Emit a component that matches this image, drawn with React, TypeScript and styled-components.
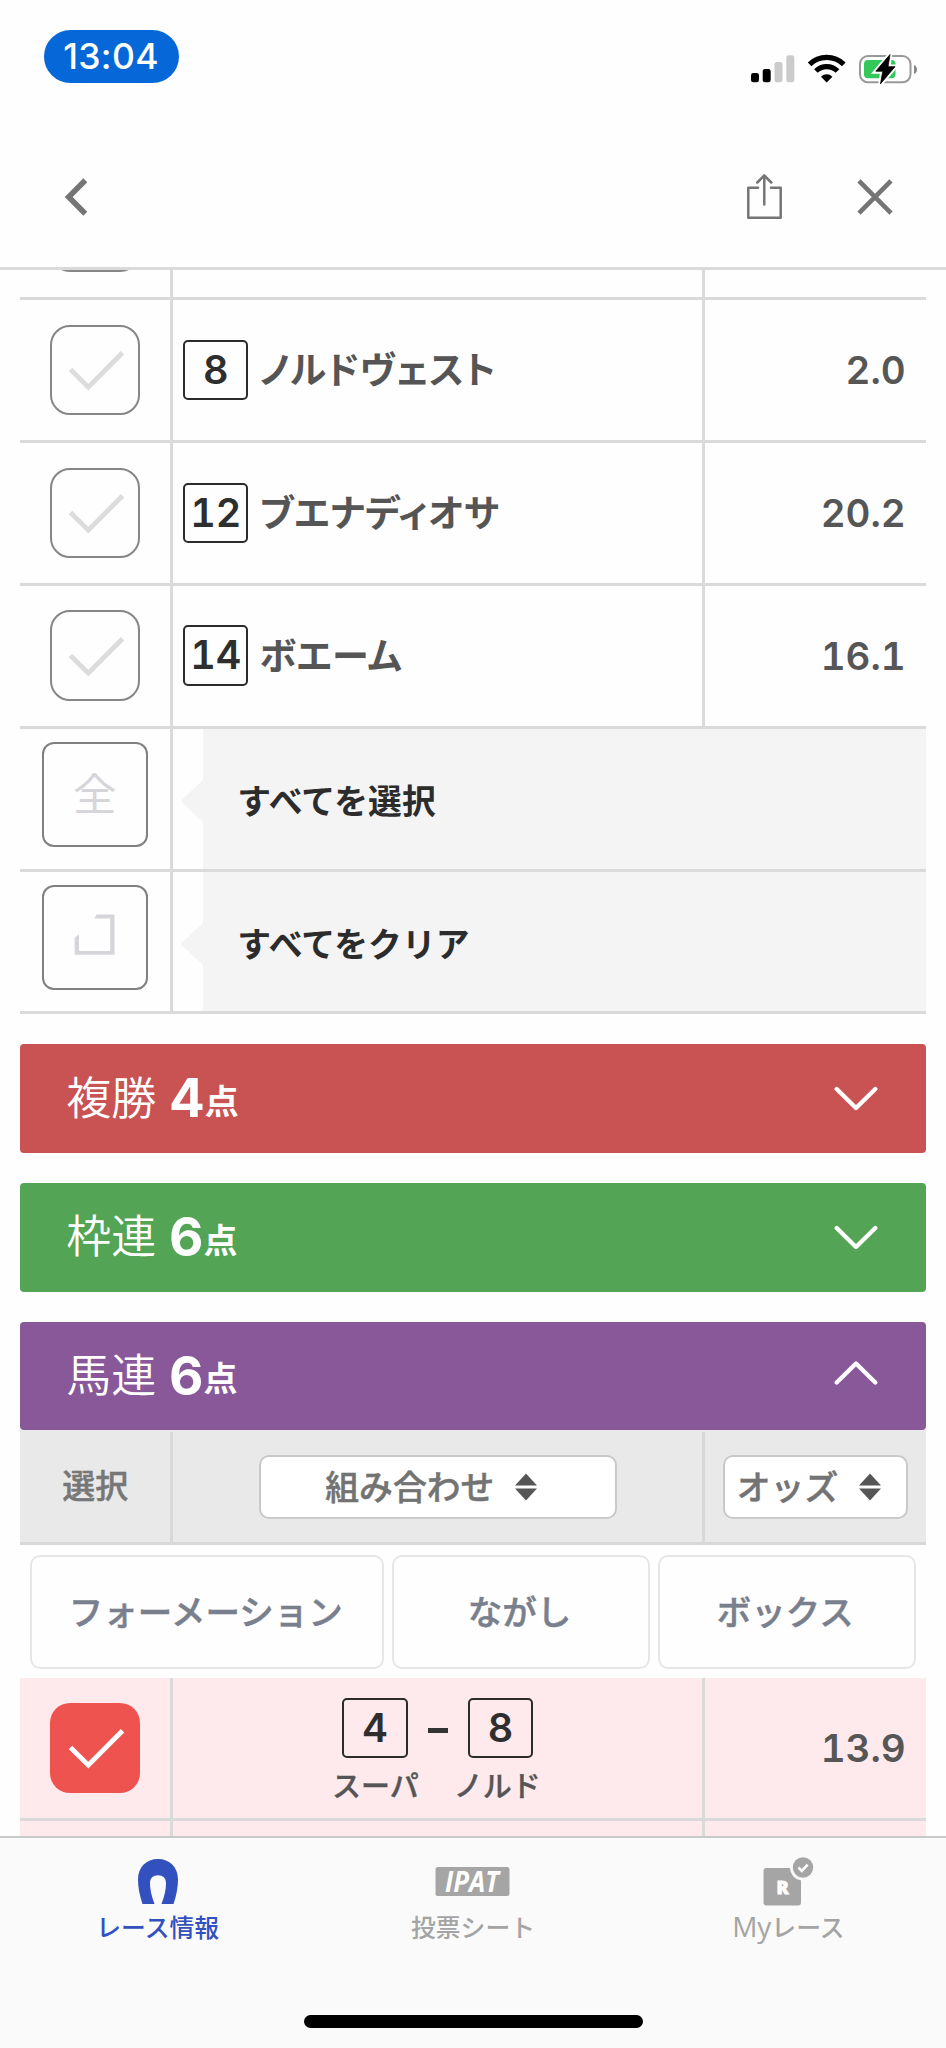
import React from "react";
import styled, { createGlobalStyle } from "styled-components";

const jp = `"Noto Sans CJK JP", "Noto Sans", sans-serif`;
const num = `Inter, "Noto Sans CJK JP", sans-serif`;
const LINE = "#dadada";

const GlobalStyle = createGlobalStyle`
  * { box-sizing: border-box; }
  body { margin: 0; background: #fefefe; }
  svg { display: block; flex: none; }
  button { font: inherit; margin: 0; padding: 0; border: 0; background: none; }
`;

const Screen = styled.div`
  width: 946px;
  height: 2048px;
  display: flex;
  flex-direction: column;
  overflow: hidden;
  background: #fefefe;
  font-family: ${jp};
  white-space: nowrap;
`;

const StatusBar = styled.div`
  height: 112px;
  flex: none;
  display: flex;
  align-items: flex-start;
  justify-content: space-between;
  padding: 29.5px 27px 0 44px;
`;

const TimePill = styled.div`
  width: 135px;
  height: 53.5px;
  border-radius: 27px;
  background: #0567d8;
  color: #fff;
  display: flex;
  align-items: center;
  justify-content: center;
  padding: 0 1px 0 0;
  font: 450 35.5px/1 ${num};
  letter-spacing: 0.3px;
`;

const StatusIcons = styled.div`
  padding-top: 22.5px;
`;

const NavBar = styled.header`
  height: 158px;
  flex: none;
  display: flex;
  align-items: center;
  padding: 14px 53px 0 64px;
  border-bottom: 3px solid ${LINE};
`;

const NavActions = styled.div`
  margin-left: auto;
  display: flex;
  align-items: center;
  gap: 75px;
`;

const Content = styled.main`
  flex: 1;
  min-height: 0;
  overflow: hidden;
  padding: 0 20.3px;
`;

const BetRow = styled.div<{ $h: number; $bg?: string; $scrolled?: number }>`
  height: ${(p) => p.$h}px;
  margin-top: ${(p) => -(p.$scrolled || 0)}px;
  display: grid;
  grid-template-columns: 153px 532px 1fr;
  border-bottom: 3px solid ${LINE};
  background: ${(p) => p.$bg || "transparent"};
`;

const SelectCell = styled.div`
  display: flex;
  align-items: center;
  justify-content: center;
  padding-right: 1px;
  border-right: 3px solid ${LINE};
`;

const NameCell = styled.div`
  display: flex;
  align-items: center;
  gap: 11px;
  padding-left: 9.7px;
  border-right: 3px solid ${LINE};
`;

const PairCell = styled.div`
  display: flex;
  flex-direction: column;
  align-items: center;
  padding: 20px 0 0 0;
  border-right: 3px solid ${LINE};
`;

const OddsCell = styled.div`
  display: flex;
  align-items: center;
  justify-content: flex-end;
  padding: 1px 20px 0 0;
  color: #565656;
  font: 560 38.5px/1 ${num};
  font-variant-numeric: tabular-nums;
`;

const CheckBox = styled.button<{ $on?: boolean }>`
  width: 90.5px;
  height: 90.5px;
  flex: none;
  border-radius: 20px;
  display: flex;
  align-items: center;
  justify-content: center;
  padding: 0 2px 2px 0;
  border: ${(p) => (p.$on ? "0" : "2px solid #868686")};
  background: ${(p) => (p.$on ? "#ef5350" : "transparent")};
  color: ${(p) => (p.$on ? "#fff" : "#dcdcdc")};
`;

const HorseNumber = styled.span`
  width: 65.5px;
  height: 60.5px;
  border: 2px solid #2b2b2b;
  border-radius: 5px;
  display: flex;
  align-items: center;
  justify-content: center;
  padding-top: 1px;
  color: #2e2e2e;
  font: 570 39.5px/1 ${num};
  font-variant-numeric: tabular-nums;
`;

const HorseName = styled.span`
  padding-bottom: 2px;
  color: #555;
  font-size: 37px;
  font-weight: 700;
  line-height: 1;
  letter-spacing: 0.5px;
  font-feature-settings: "palt";
`;

const Pair = styled.div`
  display: flex;
  align-items: center;
  gap: 20px;
`;

const Dash = styled.span`
  width: 20px;
  height: 5px;
  margin-top: 5px;
  background: #333;
`;

const PairNames = styled.div`
  display: flex;
  gap: 35px;
  margin-top: 12px;
  padding-right: 3px;
  color: #555;
  font-size: 29px;
  line-height: 1;
  font-weight: 500;
  -webkit-text-stroke: 0.4px currentColor;
`;

const BulkCell = styled.div`
  grid-column: 2 / 4;
  display: flex;
  align-items: center;
  padding-left: 7.5px;
`;

const BulkPointer = styled.svg`
  margin-top: 4px;
`;

const BulkLabel = styled.div`
  flex: 1;
  height: 100%;
  display: flex;
  align-items: center;
  padding: 2px 0 0 34px;
  background: #f4f4f4;
  color: #2c2c2c;
  font-size: 33.8px;
  font-weight: 700;
`;

const BulkButton = styled.button`
  width: 105.5px;
  height: 105.5px;
  margin-bottom: 8px;
  border: 2px solid #808080;
  border-radius: 12px;
  display: flex;
  align-items: center;
  justify-content: center;
  padding-bottom: 5px;
  color: #d5d5da;
  font: 400 43.5px/1 ${jp};
`;

const Accordion = styled.button<{ $color: string; $last?: boolean }>`
  width: 100%;
  height: 108.4px;
  margin-bottom: ${(p) => (p.$last ? 0 : 30.3)}px;
  border-radius: 4px;
  background: ${(p) => p.$color};
  color: #fff;
  display: flex;
  align-items: center;
  padding: 0 48px 0 46px;
`;

const BetType = styled.span`
  padding-bottom: 7px;
  font-family: ${jp};
  font-weight: 350;
  font-size: 45px;
  line-height: 1;
`;

const BetCount = styled.span`
  display: flex;
  align-items: center;
  margin-left: 12.7px;
  font: 660 53px/1 ${num};
`;

const CountUnit = styled.small`
  padding-top: 2.5px;
  font: 700 34px/1 ${jp};
`;

const AccordionArrow = styled.span<{ $up?: boolean }>`
  margin-left: auto;
  padding-bottom: ${(p) => (p.$up ? 5 : 1)}px;
`;

const BetSections = styled.div`
  margin-top: 30px;
`;

const TableHead = styled.div`
  height: 115px;
  padding-top: 2px;
  display: grid;
  grid-template-columns: 153px 532px 1fr;
  background: #e9e9e9;
  border-bottom: 3px solid #d8d8d8;
`;

const HeadCell = styled.div<{ $divider?: boolean }>`
  display: flex;
  align-items: center;
  justify-content: center;
  border-right: ${(p) => (p.$divider ? "3px solid #d8d8d8" : "0")};
  color: #777;
  font-size: 33px;
  font-weight: 500;
  -webkit-text-stroke: 0.5px currentColor;
`;

const HeadText = styled.span`
  padding-bottom: 6px;
`;

const SortButton = styled.button<{ $w: number }>`
  width: ${(p) => p.$w}px;
  height: 64.5px;
  border: 2px solid #c9c9c9;
  border-radius: 10px;
  background: #fff;
  display: flex;
  align-items: center;
  justify-content: center;
  gap: 21px;
  padding-right: 13px;
  color: #737373;
  font-size: 33.8px;
  line-height: 1;
`;

const SortText = styled.span`
  padding-bottom: 2px;
`;

const MethodBar = styled.div`
  height: 132.5px;
  padding: 10px 10px 9px;
  display: grid;
  grid-template-columns: 354px 258px 258px;
  gap: 7.7px;
`;

const MethodButton = styled.button`
  border: 2px solid #e5e6e8;
  border-radius: 10px;
  padding: 0 3px 4px 0;
  color: #7a7f8d;
  font-size: 34.5px;
  font-weight: 500;
  line-height: 1;
  -webkit-text-stroke: 0.5px currentColor;
`;

const TabBar = styled.nav`
  height: 212px;
  flex: none;
  border-top: 2px solid #c9c9c9;
  background: #fafafa;
  display: flex;
  flex-direction: column;
  align-items: center;
`;

const Tabs = styled.div`
  width: 100%;
  height: 177px;
  display: grid;
  grid-template-columns: repeat(3, 1fr);
`;

const Tab = styled.div<{ $active?: boolean }>`
  display: flex;
  flex-direction: column;
  align-items: center;
  padding-top: 18px;
  color: ${(p) => (p.$active ? "#3350bf" : "#a4a4a4")};
  font-size: 24.8px;
  line-height: 28px;
  font-weight: 500;
`;

const TabIcon = styled.div`
  height: 55.5px;
`;

const Latin = styled.span`
  font-family: "Open Sans", sans-serif;
  font-size: 28px;
  font-weight: 400;
`;

const HomeIndicator = styled.div`
  width: 339px;
  height: 13px;
  border-radius: 7px;
  background: #000;
`;

const Check = () => (
  <svg width="60" height="46" viewBox="0 0 60 46" fill="none" stroke="currentColor" strokeWidth="4.8">
    <path d="M6.5 23.5L24.3 41.2L58.5 6.8" />
  </svg>
);

const SortIcon = () => (
  <svg width="22" height="28" viewBox="0 0 22 28" fill="#565656">
    <path d="M11 0.5L22 12.6H0Z" />
    <path d="M11 27.5L22 15.4H0Z" />
  </svg>
);

const Pointer = () => (
  <BulkPointer width="22.5" height="44" viewBox="0 0 22.5 44" fill="#f4f4f4">
    <path d="M23 0L1 20.5Q0 22 1 23.5L23 44Z" />
  </BulkPointer>
);

const Arrow = ({ up }: { up?: boolean }) => (
  <svg width="44" height="28" viewBox="0 0 44 28" fill="none" stroke="#fff" strokeWidth="4.3" strokeLinecap="round" strokeLinejoin="round">
    <path d={up ? "M2.7 22.5L22 3.5L41.3 22.5" : "M2.7 5L22 24L41.3 5"} />
  </svg>
);

const runners = [
  { no: 8, name: "ノルドヴェスト", odds: "2.0" },
  { no: 12, name: "ブエナディオサ", odds: "20.2" },
  { no: 14, name: "ボエーム", odds: "16.1" },
];

const sections = [
  { type: "複勝", count: 4, color: "#c95253" },
  { type: "枠連", count: 6, color: "#53a454" },
  { type: "馬連", count: 6, color: "#885899", open: true },
];

export default function App() {
  return (
    <>
      <GlobalStyle />
      <Screen>
        <StatusBar>
          <TimePill>13:04</TimePill>
          <StatusIcons>
            <svg width="169" height="34" viewBox="750 52 169 34">
              <rect x="751" y="73" width="8" height="9.3" rx="2.4" />
              <rect x="762.7" y="69" width="8" height="13.3" rx="2.4" />
              <rect x="774.5" y="62" width="8" height="20.3" rx="2.4" fill="#cbcbcb" />
              <rect x="786.3" y="55.3" width="8" height="27" rx="2.4" fill="#cbcbcb" />
              <g fill="none" stroke="#000" strokeWidth="5.2">
                <path d="M809.6 64.3A24.5 24.5 0 0 1 843.8 64.3" />
                <path d="M815.9 71A15.4 15.4 0 0 1 837.5 71" />
              </g>
              <path d="M826.7 82.4L821 76.7A8 8 0 0 1 832.4 76.7Z" />
              <rect x="860" y="56" width="50.5" height="26.3" rx="8" fill="none" stroke="#999" strokeWidth="2" />
              <path d="M914 65C918 66.5 918 72.5 914 74Z" fill="#888" />
              <rect x="864" y="60" width="31.5" height="18.3" rx="4" fill="#34c759" />
              <path d="M890 54.5L875.8 71.5H882.5L880.5 83.8L895 66.7H888.3Z" stroke="#fff" strokeWidth="4.5" fill="#fff" />
              <path d="M890 54.5L875.8 71.2H882.8L880.5 83.8L895 66.7H888Z" stroke="#000" strokeWidth="0.8" strokeLinejoin="round" />
            </svg>
          </StatusIcons>
        </StatusBar>
        <NavBar>
          <svg width="24" height="38" viewBox="0 0 24 38" fill="none" stroke="#757575" strokeWidth="5.6">
            <path d="M21.3 2.3L4.7 19L21.3 35.7" />
          </svg>
          <NavActions>
            <svg width="36" height="46" viewBox="0 0 36 46" fill="none" stroke="#757575" strokeWidth="2.5">
              <path d="M12 13.7H2.3V43.7H34.7V13.7H25" strokeLinecap="round" strokeLinejoin="round" />
              <path d="M18.3 30.5V1.7M11.3 8.5L18.3 1.5L25.3 8.5" strokeLinecap="round" />
            </svg>
            <svg width="36" height="36" viewBox="0 0 36 36" fill="none" stroke="#757575" strokeWidth="4.6">
              <path d="M2 1.8L34 34.2M34 1.8L2 34.2" />
            </svg>
          </NavActions>
        </NavBar>

        <Content>
          <BetRow $h={142.9} $scrolled={112.9}>
            <SelectCell>
              <CheckBox><Check /></CheckBox>
            </SelectCell>
            <NameCell />
            <OddsCell />
          </BetRow>
          {runners.map((r) => (
            <BetRow $h={142.9} key={r.no}>
              <SelectCell>
                <CheckBox><Check /></CheckBox>
              </SelectCell>
              <NameCell>
                <HorseNumber>{r.no}</HorseNumber>
                <HorseName>{r.name}</HorseName>
              </NameCell>
              <OddsCell>{r.odds}</OddsCell>
            </BetRow>
          ))}
          <BetRow $h={142.9}>
            <SelectCell>
              <BulkButton>全</BulkButton>
            </SelectCell>
            <BulkCell>
              <Pointer />
              <BulkLabel>すべてを選択</BulkLabel>
            </BulkCell>
          </BetRow>
          <BetRow $h={142.9}>
            <SelectCell>
              <BulkButton>
                <svg width="41" height="42" viewBox="0 0 41 42" fill="#d5d5da">
                  <path d="M22.7 0.5H40.5V40.8H0.7V24L5 20.3V37H36.2V4.5H20.3Z" />
                </svg>
              </BulkButton>
            </SelectCell>
            <BulkCell>
              <Pointer />
              <BulkLabel>すべてをクリア</BulkLabel>
            </BulkCell>
          </BetRow>

          <BetSections>
            {sections.map((s) => (
              <Accordion key={s.type} $color={s.color} $last={s.open}>
                <BetType>{s.type}</BetType>
                <BetCount>{s.count}<CountUnit>点</CountUnit></BetCount>
                <AccordionArrow $up={s.open}><Arrow up={s.open} /></AccordionArrow>
              </Accordion>
            ))}
          </BetSections>

          <TableHead>
            <HeadCell $divider><HeadText>選択</HeadText></HeadCell>
            <HeadCell $divider>
              <SortButton $w={358}><SortText>組み合わせ</SortText><SortIcon /></SortButton>
            </HeadCell>
            <HeadCell>
              <SortButton $w={185.5}><SortText>オッズ</SortText><SortIcon /></SortButton>
            </HeadCell>
          </TableHead>
          <MethodBar>
            <MethodButton>フォーメーション</MethodButton>
            <MethodButton>ながし</MethodButton>
            <MethodButton>ボックス</MethodButton>
          </MethodBar>
          <BetRow $h={143.4} $bg="#feeaec">
            <SelectCell>
              <CheckBox $on><Check /></CheckBox>
            </SelectCell>
            <PairCell>
              <Pair>
                <HorseNumber>4</HorseNumber>
                <Dash />
                <HorseNumber>8</HorseNumber>
              </Pair>
              <PairNames>
                <span>スーパ</span>
                <span>ノルド</span>
              </PairNames>
            </PairCell>
            <OddsCell>13.9</OddsCell>
          </BetRow>
          <BetRow $h={143} $bg="#feeaec">
            <SelectCell />
            <PairCell />
            <OddsCell />
          </BetRow>
        </Content>

        <TabBar>
          <Tabs>
            <Tab $active>
              <TabIcon>
                <svg width="42" height="50" viewBox="0 0 42 50" fill="currentColor">
                  <path d="M5.5 48C2.5 39 1 31 1 23.5C1 11 9.5 3 21 3C32.5 3 41 11 41 23.5C41 31 39.5 39 36.5 48H24.5C27.5 40 29 33.5 29 27.5C29 22 26 19.3 21 19.3C16 19.3 13 22 13 27.5C13 33.5 14.5 40 17.5 48Z" />
                </svg>
              </TabIcon>
              レース情報
            </Tab>
            <Tab>
              <TabIcon>
                <svg width="75" height="50" viewBox="0 0 75 50">
                  <rect x="0.5" y="11" width="74" height="29" rx="2.5" fill="#a5a5a5" />
                  <text x="37" y="35.8" textAnchor="middle" fill="#fff" fontFamily="Open Sans, sans-serif" fontWeight="700" fontStyle="italic" fontSize="28.5" textLength="54" lengthAdjust="spacingAndGlyphs">IPAT</text>
                </svg>
              </TabIcon>
              投票シート
            </Tab>
            <Tab>
              <TabIcon>
                <svg width="51" height="52" viewBox="0 0 51 52">
                  <rect x="0.5" y="12" width="37.5" height="37.5" rx="3" fill="#a5a5a5" />
                  <circle cx="40" cy="11.5" r="13" fill="#fafafa" />
                  <circle cx="40" cy="11.5" r="10.2" fill="#a5a5a5" />
                  <path d="M35.5 11.5L38.8 14.8L44.7 8.7" stroke="#fff" strokeWidth="2.6" fill="none" />
                  <text x="19.5" y="38" textAnchor="middle" fill="#fff" stroke="#fff" strokeWidth="0.8" fontFamily="Open Sans, sans-serif" fontWeight="800" fontSize="18">R</text>
                </svg>
              </TabIcon>
              <span><Latin>My</Latin>レース</span>
            </Tab>
          </Tabs>
          <HomeIndicator />
        </TabBar>
      </Screen>
    </>
  );
}
